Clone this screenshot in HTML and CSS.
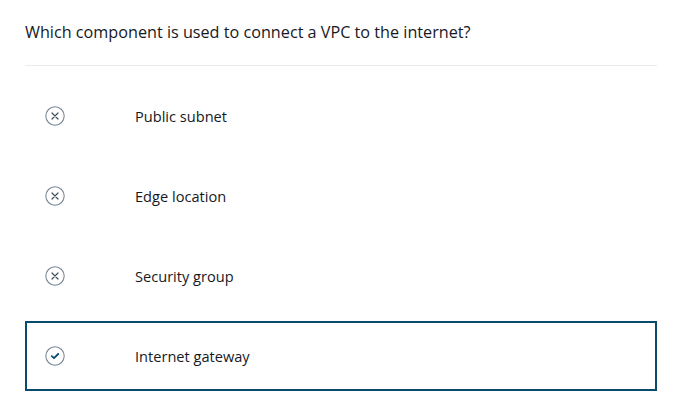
FILE: index.html
```html
<!DOCTYPE html>
<html>
<head>
<meta charset="utf-8">
<link rel="stylesheet" href="styles.css">
</head>
<body>
<div class="quiz">
  <h1 class="question">Which component is used to connect a VPC to the internet?</h1>
  <div class="divider"></div>
  <ul class="options">
    <li class="option">
      <svg class="icon" viewBox="0 0 20 20" width="20" height="20"><circle cx="10" cy="10" r="9.2" fill="none" stroke="#7d8998" stroke-width="1.1"/><path d="M7 7 L13 13 M13 7 L7 13" stroke="#414d5c" stroke-width="1.2" stroke-linecap="round"/></svg>
      <span class="label">Public subnet</span>
    </li>
    <li class="option">
      <svg class="icon" viewBox="0 0 20 20" width="20" height="20"><circle cx="10" cy="10" r="9.2" fill="none" stroke="#7d8998" stroke-width="1.1"/><path d="M7 7 L13 13 M13 7 L7 13" stroke="#414d5c" stroke-width="1.2" stroke-linecap="round"/></svg>
      <span class="label">Edge location</span>
    </li>
    <li class="option">
      <svg class="icon" viewBox="0 0 20 20" width="20" height="20"><circle cx="10" cy="10" r="9.2" fill="none" stroke="#7d8998" stroke-width="1.1"/><path d="M7 7 L13 13 M13 7 L7 13" stroke="#414d5c" stroke-width="1.2" stroke-linecap="round"/></svg>
      <span class="label">Security group</span>
    </li>
    <li class="option selected">
      <svg class="icon" viewBox="0 0 20 20" width="20" height="20"><circle cx="10" cy="10" r="9.2" fill="none" stroke="#7d8998" stroke-width="1.1"/><path d="M6.8 10.2 L9 12.2 L13.2 8" fill="none" stroke="#0b4a6f" stroke-width="1.8" stroke-linecap="round" stroke-linejoin="round"/></svg>
      <span class="label">Internet gateway</span>
    </li>
  </ul>
</div>
</body>
</html>
```

FILE: styles.css
```css
html, body {
  margin: 0;
  padding: 0;
  background: #ffffff;
}
body {
  font-family: "Open Sans", "Noto Sans", sans-serif;
  color: #16191f;
}
.quiz {
  width: 632px;
  padding: 20px 0 0 25px;
}
.question {
  margin: 0;
  font-size: 16.2px;
  font-weight: 400;
  line-height: 24px;
  height: 24px;
}
.divider {
  margin-top: 21px;
  height: 1px;
  background: #e9ebed;
}
.options {
  list-style: none;
  margin: 15px 0 0 0;
  padding: 0;
  display: flex;
  flex-direction: column;
  gap: 10px;
}
.option {
  box-sizing: border-box;
  height: 70px;
  border: 2px solid transparent;
  display: flex;
  align-items: center;
  padding-left: 18px;
}
.option.selected {
  border-color: #0b4a6f;
}
.icon {
  flex: none;
  display: block;
}
.label {
  margin-left: 70px;
  font-size: 14.6px;
  line-height: 20px;
}
```
